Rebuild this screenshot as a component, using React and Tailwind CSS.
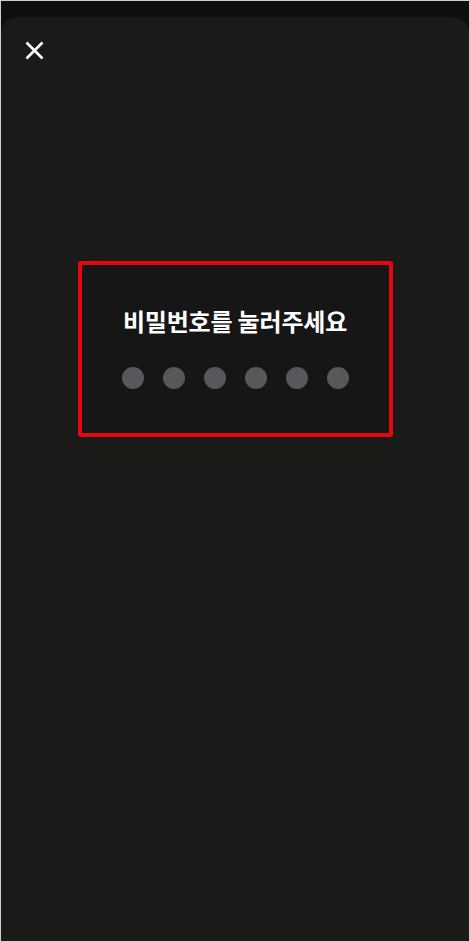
import React from "react";

export default function App() {
  return (
    <div className="w-[470px] h-[942px] border border-[#cfcfcf] bg-[#0e100d] flex flex-col pt-[16px] overflow-hidden" style={{ fontFamily: '"Noto Sans CJK KR", "Noto Sans", sans-serif' }}>
      <div className="flex-1 rounded-t-[16px] bg-[#1a1a18] flex flex-col px-[24px] pt-[24px]">
        <button className="w-[19px] h-[19px] flex items-center justify-center">
          <svg width="19" height="19" viewBox="0 0 19 19" fill="none" stroke="white" strokeWidth="2.6" strokeLinecap="butt">
            <path d="M1.5 1.5 L17.5 17.5 M17.5 1.5 L1.5 17.5" />
          </svg>
        </button>
        <div className="self-center mt-[201px] w-[315px] h-[176px] border-4 border-[#e5070f] rounded-[3px] bg-[#161616] flex flex-col items-center pt-[38px]">
          <div className="text-white text-[24px] leading-[36px] font-bold tracking-[-0.2px]">비밀번호를 눌러주세요</div>
          <div className="flex gap-[19px] mt-[28px]">
            {[0, 1, 2, 3, 4, 5].map((i) => (
              <div key={i} className="w-[22px] h-[22px] rounded-full bg-[#58585c]" />
            ))}
          </div>
        </div>
      </div>
    </div>
  );
}
